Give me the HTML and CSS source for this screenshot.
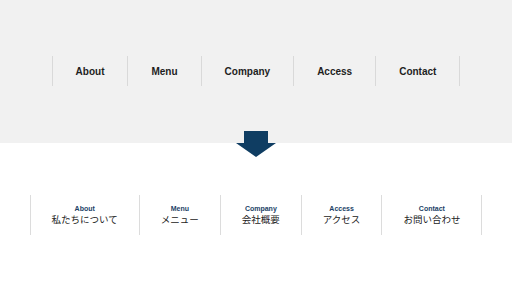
FILE: index.html
```html
<!DOCTYPE html>
<html lang="ja">
<head>
  <meta charset="UTF-8">
  <meta name="viewport" content="width=device-width, initial-scale=1.0">
  <title>Global Navigation</title>
  <link rel="stylesheet" href="styles.css">
</head>
<body>
  <div class="before">
    <ul class="nav">
      <li class="nav-item">About</li>
      <li class="nav-item">Menu</li>
      <li class="nav-item">Company</li>
      <li class="nav-item">Access</li>
      <li class="nav-item">Contact</li>
    </ul>
  </div>

  <div class="arrow">
    <svg width="40" height="26" viewBox="0 0 40 26">
      <polygon points="8,0 32,0 32,12 40,12 20,26 0,12 8,12" fill="#0f3d62"/>
    </svg>
  </div>

  <ul class="nav-jp">
    <li class="jp-item"><span class="en">About</span><span class="ja">私たちについて</span></li>
    <li class="jp-item"><span class="en">Menu</span><span class="ja">メニュー</span></li>
    <li class="jp-item"><span class="en">Company</span><span class="ja">会社概要</span></li>
    <li class="jp-item"><span class="en">Access</span><span class="ja">アクセス</span></li>
    <li class="jp-item"><span class="en">Contact</span><span class="ja">お問い合わせ</span></li>
  </ul>
</body>
</html>
```

FILE: styles.css
```css
body {
  margin: 0;
  font-family: 'Liberation Sans', Arial, 'Noto Sans CJK JP', sans-serif;
  background: #fff;
  color: #222;
}
ul {
  list-style: none;
  margin: 0;
  padding: 0;
}
.before {
  background: #f1f1f1;
  height: 143px;
  padding-top: 56px;
  box-sizing: border-box;
}
.nav {
  display: flex;
  justify-content: center;
}
.nav-item {
  height: 30px;
  line-height: 32px;
  padding: 0 23px;
  font-size: 10px;
  font-weight: bold;
  color: #1e1e1e;
  border-left: 1px solid #d9d9d9;
}
.nav-item:last-child {
  border-right: 1px solid #d9d9d9;
}
.arrow {
  display: flex;
  justify-content: center;
  margin-top: -12px;
  height: 26px;
}
.nav-jp {
  display: flex;
  justify-content: center;
  margin-top: 38px;
}
.jp-item {
  height: 40px;
  padding: 0 21px;
  display: flex;
  flex-direction: column;
  align-items: center;
  justify-content: center;
  border-left: 1px solid #dcdcdc;
}
.jp-item:last-child {
  border-right: 1px solid #dcdcdc;
}
.en {
  font-size: 7px;
  font-weight: bold;
  color: #1b3f66;
  line-height: 9px;
}
.ja {
  font-family: 'Noto Sans CJK JP', sans-serif;
  font-size: 9.5px;
  line-height: 13px;
  color: #222;
}
```
